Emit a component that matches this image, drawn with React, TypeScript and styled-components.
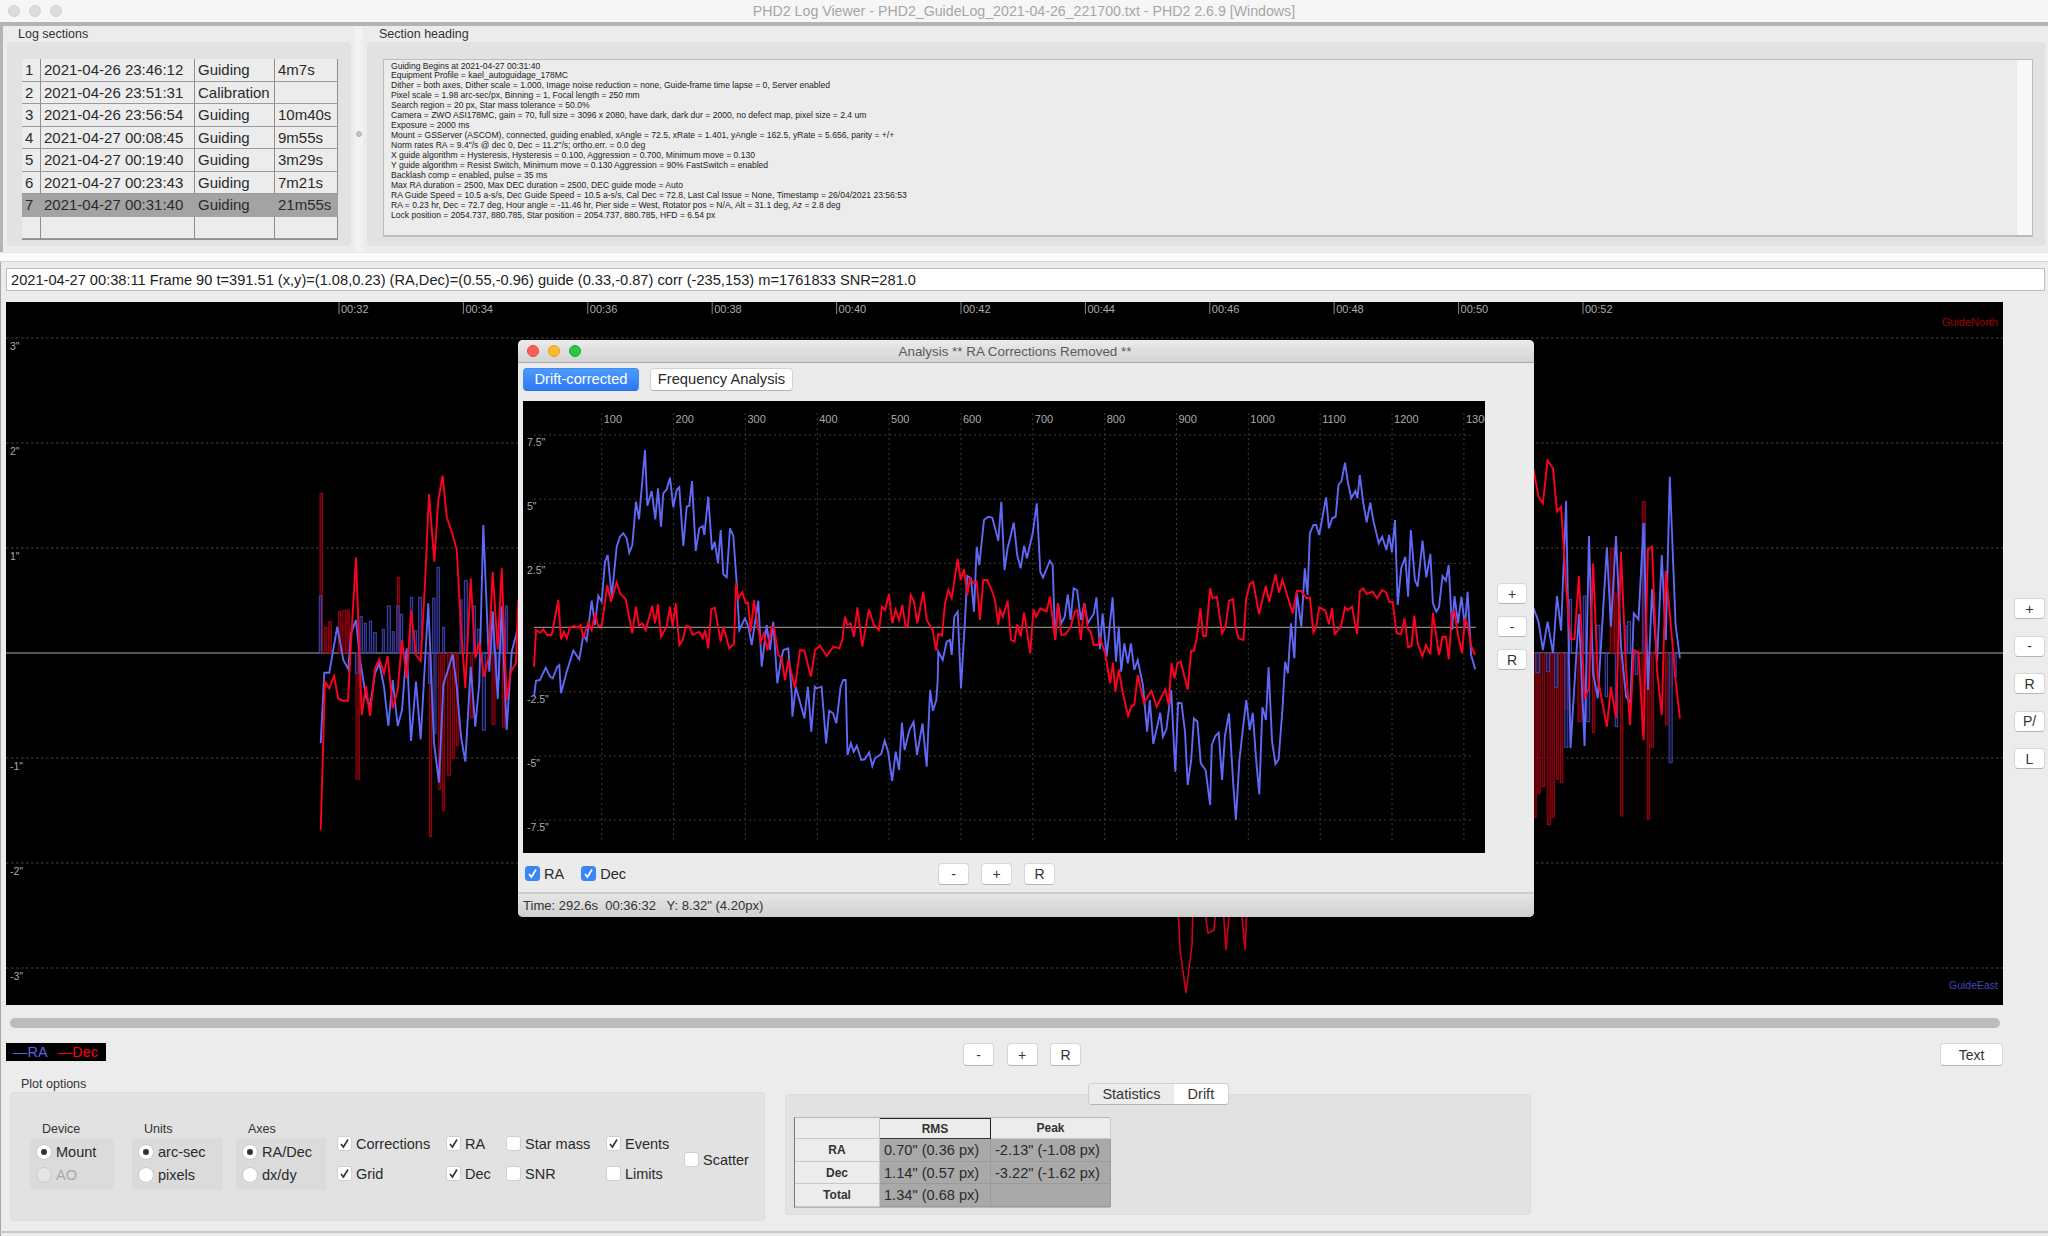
import styled, { createGlobalStyle } from 'styled-components'

const GlobalStyle = createGlobalStyle`
  html, body { margin: 0; padding: 0; background: #ececec; }
  * { box-sizing: border-box; }
`

type Pt = [number, number]

// traced points are kept in crop coordinates, this puts them back on the page
const toPage = (pts: Pt[], ox: number, oy: number, sx = 3, sy = 3): Pt[] =>
  pts.map(([x, y]) => [ox + x / sx, oy + y / sy])

const toLine = (pts: Pt[]) => pts.map(([x, y]) => `${x.toFixed(1)},${y.toFixed(1)}`).join(' ')

// ─── data: section table ───
const sections = [
  ['1', '2021-04-26 23:46:12', 'Guiding', '4m7s'],
  ['2', '2021-04-26 23:51:31', 'Calibration', ''],
  ['3', '2021-04-26 23:56:54', 'Guiding', '10m40s'],
  ['4', '2021-04-27 00:08:45', 'Guiding', '9m55s'],
  ['5', '2021-04-27 00:19:40', 'Guiding', '3m29s'],
  ['6', '2021-04-27 00:23:43', 'Guiding', '7m21s'],
  ['7', '2021-04-27 00:31:40', 'Guiding', '21m55s'],
  ['', '', '', ''],
]

const headingLines = [
  'Guiding Begins at 2021-04-27 00:31:40',
  'Equipment Profile = kael_autoguidage_178MC',
  'Dither = both axes, Dither scale = 1.000, Image noise reduction = none, Guide-frame time lapse = 0, Server enabled',
  'Pixel scale = 1.98 arc-sec/px, Binning = 1, Focal length = 250 mm',
  'Search region = 20 px, Star mass tolerance = 50.0%',
  'Camera = ZWO ASI178MC, gain = 70, full size = 3096 x 2080, have dark, dark dur = 2000, no defect map, pixel size = 2.4 um',
  'Exposure = 2000 ms',
  'Mount = GSServer (ASCOM), connected, guiding enabled, xAngle = 72.5, xRate = 1.401, yAngle = 162.5, yRate = 5.656, parity = +/+',
  'Norm rates RA = 9.4"/s @ dec 0, Dec = 11.2"/s; ortho.err. = 0.0 deg',
  'X guide algorithm = Hysteresis, Hysteresis = 0.100, Aggression = 0.700, Minimum move = 0.130',
  'Y guide algorithm = Resist Switch, Minimum move = 0.130 Aggression = 90% FastSwitch = enabled',
  'Backlash comp = enabled, pulse = 35 ms',
  'Max RA duration = 2500, Max DEC duration = 2500, DEC guide mode = Auto',
  'RA Guide Speed = 10.5 a-s/s, Dec Guide Speed = 10.5 a-s/s, Cal Dec = 72.8, Last Cal Issue = None, Timestamp = 26/04/2021 23:56:53',
  'RA = 0.23 hr, Dec = 72.7 deg, Hour angle = -11.46 hr, Pier side = West, Rotator pos = N/A, Alt = 31.1 deg, Az = 2.8 deg',
  'Lock position = 2054.737, 880.785, Star position = 2054.737, 880.785, HFD = 6.54 px',
]

// ─── data: main plot, only what shows around the dialog ───
const leftBlue = toPage([[122,850],[133,638],[148,638],[172,500],[190,600],[205,628],[213,520],[228,480],[240,600],[258,710],[270,740],[285,640],[298,610],[312,680],[325,798],[338,660],[353,798],[366,750],[380,565],[393,843],[408,665],[422,838],[445,430],[462,850],[477,968],[490,675],[518,583],[530,680],[543,830],[556,905],[572,620],[586,800],[598,670],[610,195],[628,635],[638,455],[653,718],[665,440],[680,810],[695,575],[715,500]], 280, 460)
const leftRed = toPage([[122,1110],[135,665],[148,685],[162,648],[175,716],[190,722],[204,722],[215,510],[228,292],[245,765],[258,678],[270,768],[285,625],[298,597],[312,640],[323,588],[338,745],[353,690],[366,540],[380,655],[393,452],[408,585],[422,603],[435,370],[447,102],[463,305],[475,120],[488,47],[500,170],[518,225],[530,268],[543,500],[556,685],[572,355],[586,595],[598,548],[612,650],[626,590],[638,335],[653,568],[665,325],[680,720],[692,635],[708,610],[715,420]], 280, 460)
const rightBlue = toPage([[40,505],[55,545],[68,630],[82,545],[98,640],[110,468],[122,572],[137,182],[150,925],[175,522],[192,918],[205,288],[217,700],[231,775],[258,322],[270,560],[285,288],[300,620],[315,770],[328,790],[338,520],[352,538],[367,250],[380,750],[392,448],[407,665],[421,345],[433,600],[445,110],[462,555],[475,655]], 1520, 440, 2.97)
const rightRed = toPage([[40,88],[55,170],[68,190],[82,62],[98,85],[110,215],[122,200],[137,440],[150,597],[162,598],[175,408],[192,775],[205,745],[217,370],[231,715],[258,860],[270,740],[285,835],[300,335],[315,690],[327,855],[338,630],[352,637],[367,900],[380,328],[392,320],[407,690],[421,825],[433,392],[445,520],[462,720],[475,835]], 1520, 440, 2.97)
const underRed: Pt[] = [[1178,905],[1180,950],[1186,993],[1192,945],[1193,905],[1204,905],[1208,933],[1214,930],[1216,905],[1223,905],[1226,950],[1230,905],[1241,905],[1245,950],[1247,905]]

type Bar = [number, number, number]
const ZERO_Y = 653
const barRect = ([x0, x1, y]: Bar) => ({ x: x0, width: x1 - x0, y: Math.min(y, ZERO_Y), height: Math.abs(y - ZERO_Y) })

const leftBars = (bars: Bar[]): Bar[] => bars.map(([a, b, y]) => [280 + a / 3, 280 + b / 3, 460 + y / 3])
const rightBars = (bars: Bar[]): Bar[] => bars.map(([a, b, y]) => [1520 + a / 2.97, 1520 + b / 2.97, 440 + y / 3])

const redBars = [
  ...leftBars([[120,127,100],[133,140,502],[145,154,485],[175,182,455],[187,197,452],[201,208,450],[352,358,352],[228,238,958],[448,455,1130],[475,482,988],[487,494,1052],[503,511,946],[517,524,896],[529,535,857],[571,578,773],[636,645,793],[667,674,802]]),
  ...rightBars([[40,48,1132],[53,60,1060],[66,73,1040],[81,90,1154],[95,102,1132],[108,115,1018],[120,127,1028],[133,142,805],[172,182,845],[215,222,878],[298,305,1128],[378,385,1138],[390,397,922],[432,439,855],[445,452,745],[362,368,885],[268,280,325],[281,288,460],[363,372,185]]),
]
const blueBars = [
  ...leftBars([[118,125,408],[240,247,470],[253,259,490],[268,275,484],[281,289,518],[307,313,508],[322,331,438],[337,343,515],[350,357,438],[361,368,463],[391,398,412],[403,410,512],[416,424,412],[458,465,415],[471,478,322],[488,494,502],[540,546,420],[553,562,362],[580,586,438],[592,600,508],[633,640,455],[663,670,438],[677,682,438],[226,235,640],[445,451,670],[462,468,820],[607,616,810],[650,658,660]]),
  ...rightBars([[47,58,698],[78,88,695],[103,112,742],[133,142,922],[198,207,845],[253,260,770],[283,290,860],[342,350,703],[443,452,968],[458,464,710],[147,153,478],[188,195,468],[227,237,556],[312,318,558],[319,328,545],[365,372,250]]),
]

const timeTicks = ['00:32','00:34','00:36','00:38','00:40','00:42','00:44','00:46','00:48','00:50','00:52']
const plotRows = [['3"',338],['2"',443],['1"',548],['-1"',758],['-2"',863],['-3"',968]] as const

// ─── data: drift chart in the dialog ───
const driftBlue: Pt[] = [
  ...toPage([[72,1100]], 510, 330),
  ...toPage([[78,1052],[90,1050],[107,1013],[120,1040],[128,1045],[142,1010],[148,1005],[153,1090],[170,1025],[190,962],[208,988],[220,915],[230,932],[245,812],[255,885],[265,797],[275,815],[285,695],[293,675],[305,800],[320,650],[330,620],[340,610],[350,625],[358,668],[367,645],[378,515],[387,568],[405,360],[412,527],[425,483],[436,568],[444,475],[453,590],[460,490],[470,478],[480,443],[490,532],[500,480],[508,472],[520,648],[530,530],[538,527],[546,453],[557,663],[568,595],[578,588],[583,615],[595,500],[606,660],[614,635],[624,700],[632,600],[640,733],[650,742],[660,595],[670,617],[680,760],[688,900],[705,865],[715,890],[725,945],[745,812],[755,1010],[770,885],[780,960],[790,875],[802,1060],[812,995],[820,960],[835,955],[845,1090]], 510, 330),
  ...toPage([[820,110],[830,20],[855,115],[865,20],[875,155],[885,20],[890,25],[905,20],[918,190],[927,92],[938,100],[948,130],[960,20],[968,0],[975,0],[980,225],[990,190],[998,215],[1007,197],[1020,240],[1030,238],[1043,217],[1052,258],[1060,235],[1078,222],[1088,182],[1098,215],[1110,303],[1120,215],[1130,270],[1138,128],[1146,210],[1160,150],[1172,125],[1182,225],[1198,130],[1210,260],[1220,30],[1228,92],[1238,60],[1242,0]], 510, 680, 2.904),
  ...toPage([[1285,965],[1298,990],[1310,935],[1320,930],[1325,975],[1333,860],[1343,845],[1353,1075],[1365,870],[1372,738],[1383,745],[1392,845],[1400,650],[1408,705],[1422,570],[1435,560],[1447,563],[1465,632],[1474,515]], 510, 330),
  ...toPage([[13,540],[22,475],[40,398],[50,495],[60,535],[70,467],[78,505],[95,430],[107,340],[117,545],[125,563],[145,512],[153,525],[160,750],[168,640],[178,700],[188,680],[197,613],[205,690],[214,595],[224,600],[235,690],[245,640],[255,700],[262,688],[272,672],[280,622],[290,778],[298,670],[310,800],[327,622],[337,815],[345,710],[352,845],[361,760],[371,820],[380,760],[390,840],[400,810],[415,885]], 1000, 390, 2.904),
  ...toPage([[340,95],[348,0],[358,132],[378,38],[386,110],[396,88],[410,-30],[422,215],[430,8],[440,10],[450,95],[458,255],[468,180],[476,55],[486,65],[496,190],[510,210],[523,315],[528,135],[538,108],[548,98],[558,240],[566,108],[578,40],[590,250],[598,360],[608,180],[620,70],[628,0],[638,90],[647,38],[656,170],[666,283],[675,22],[685,60]], 1030, 700, 2.904),
  ...toPage([[780,832],[790,1050]], 1000, 390, 2.904),
  ...toPage([[703,125],[713,192],[722,178]], 1030, 700, 2.904),
  ...toPage([[820,960],[828,815],[836,850],[845,700],[855,805],[862,610],[875,710],[885,535],[893,615],[900,430],[910,405],[918,405],[927,435],[947,322],[955,415],[965,385],[975,380],[983,285],[992,272],[1002,218],[1010,275],[1020,325],[1032,303],[1038,325],[1045,255],[1055,340],[1065,397],[1075,338],[1085,395],[1100,460],[1110,440],[1122,480],[1130,435],[1138,487],[1147,390],[1155,645],[1165,535],[1177,500],[1185,620],[1193,420],[1205,570],[1213,590],[1227,452],[1238,562],[1250,492],[1257,640],[1267,665],[1275,652],[1285,558],[1295,572],[1303,525],[1313,720],[1320,618],[1330,700],[1340,620],[1350,710],[1358,605],[1368,795],[1380,838]], 1000, 390, 2.904),
]

const driftRed: Pt[] = [
  ...toPage([[72,1010],[78,900],[90,908],[100,898],[112,915],[125,915],[145,810],[153,928],[162,905],[170,925],[180,892],[192,888],[205,893],[212,885],[220,925],[235,877],[245,900],[255,850],[265,888],[275,888],[292,765],[303,815],[320,757],[330,790],[347,808],[367,910],[378,830],[387,887],[397,880],[407,900],[427,827],[435,880],[444,823],[453,920],[470,890],[480,830],[488,890],[497,820],[508,945],[518,930],[528,888],[538,890],[548,915],[568,905],[578,925],[585,900],[595,955],[604,838],[614,833],[632,935],[640,890],[658,955],[672,942],[678,760],[685,805],[697,787],[707,820],[714,818],[722,905],[732,810],[742,880],[752,935],[762,910],[772,960],[785,890],[792,892],[805,975],[815,985],[825,1050],[835,990],[855,1075],[870,960],[883,962],[903,1040],[915,960],[930,947],[950,978],[970,950],[988,955],[997,930],[1005,860],[1012,885],[1022,880],[1032,920],[1042,832],[1057,950],[1077,838],[1092,885],[1107,900],[1116,830],[1125,840],[1137,792],[1147,880],[1157,840],[1167,870],[1177,825],[1187,890],[1193,890],[1202,795],[1212,815],[1222,880],[1240,785],[1250,870],[1268,900],[1278,962],[1285,912],[1296,917],[1305,820],[1315,780],[1325,805],[1343,687],[1352,750],[1362,717],[1372,795],[1380,745],[1392,760],[1400,755],[1410,870],[1420,750],[1432,750],[1445,780],[1455,810],[1465,885]], 510, 330),
  ...toPage([[0,660],[8,680],[22,632],[32,750],[42,755],[50,703],[60,740],[70,668],[88,790],[97,658],[105,680],[117,655],[135,665],[145,620],[160,750],[168,640],[178,735],[190,733],[205,712],[217,665],[225,660],[235,750],[245,642],[255,715],[263,725],[272,765],[285,765],[290,745],[305,790],[320,880],[328,818],[335,905],[345,838],[355,900],[372,978],[382,948],[390,945],[400,855],[418,938],[440,902],[455,950],[480,898],[490,945],[498,820],[507,865],[515,820],[525,815],[545,900],[555,782],[563,782],[572,740],[582,655],[590,738],[598,738],[610,595],[617,625],[630,620],[645,730],[655,710],[665,632],[677,628],[685,715],[693,745],[707,750],[715,625],[725,583],[735,575],[752,672],[772,588],[782,635],[800,553],[810,608],[820,570],[850,670],[862,603],[875,603],[890,625],[900,623],[910,728],[918,712],[927,652],[945,662],[955,703],[964,655],[972,732],[990,710],[1002,652],[1010,660],[1022,650],[1037,732],[1045,603],[1055,595],[1065,612],[1082,605],[1095,625],[1110,600],[1122,608],[1130,635],[1140,635],[1152,730],[1165,732],[1175,685],[1185,772],[1195,768],[1203,677],[1213,760],[1227,798],[1237,765],[1250,793],[1257,668],[1275,795],[1285,740],[1295,740],[1303,808],[1313,667],[1320,665],[1330,735],[1342,790],[1350,685],[1358,705],[1368,768],[1380,795]], 1000, 390, 2.904),
]

const driftTicks = ['100','200','300','400','500','600','700','800','900','1000','1100','1200','1300']
const driftRows = [['7.5"',435],['5"',499.2],['2.5"',563.3],['-2.5"',691.7],['-5"',756],['-7.5"',820]] as const

// ─── 页面 ───
const Page = styled.div`
  position: relative;
  width: 2048px;
  height: 1236px;
  overflow: hidden;
  background: #ececec;
  color: #222;
  font-family: "Liberation Sans", Arial, sans-serif;
`

const TitleBar = styled.div`
  position: relative;
  height: 26px;
  display: flex;
  align-items: center;
  justify-content: center;
  background: #f6f6f6;
  border-bottom: 4px solid #b4b4b4;
  color: #a6a6a6;
  font-size: 14.2px;
`

const Lights = styled.div`
  position: absolute;
  left: 8px;
  top: 5px;
  display: flex;
  gap: 9px;
`

const Light = styled.span<{ $color: string; $edge: string }>`
  width: 12px;
  height: 12px;
  border-radius: 50%;
  background: ${p => p.$color};
  border: 1px solid ${p => p.$edge};
`

// ─── top splitter ───
const TopSplit = styled.div`
  height: 226px;
  display: flex;
  padding: 0 3px 0 4px;
  border-left: 3px solid #b4b4b4;
`

const TopPane = styled.div<{ $grow?: boolean }>`
  display: flex;
  flex-direction: column;
  ${p => p.$grow ? 'flex: 1;' : 'width: 344px;'}
`

const PaneTitle = styled.div<{ $indent: number }>`
  height: 16px;
  line-height: 17px;
  padding-left: ${p => p.$indent}px;
  font-size: 12.5px;
  color: #333;
`

const PaneBox = styled.div`
  height: 204px;
  padding: 17px 0 0 15px;
  background: #e2e2e2;
  border-radius: 4px;
`

const Sash = styled.div`
  width: 16px;
  margin-top: -1px;
  display: flex;
  align-items: center;
  justify-content: flex-start;
  padding: 0 0 0 4px;
`

const SashCore = styled.div`
  width: 8px;
  height: 100%;
  display: flex;
  align-items: center;
  justify-content: center;
  background: #f2f2f2;
  padding-bottom: 10px;
`

const SashDot = styled.span`
  width: 6px;
  height: 6px;
  border-radius: 50%;
  background: #c6c6c6;
  border: 1px solid #b0b0b0;
`

const SectionTable = styled.div`
  width: 316px;
  display: grid;
  grid-template-columns: 19px 154px 80px 63px;
  grid-auto-rows: 22.5px;
  background: #ececec;
  border-bottom: 1px solid #8f8f8f;
`

const SectionCell = styled.div<{ $selected: boolean }>`
  display: flex;
  align-items: center;
  padding-left: 3px;
  font-size: 15px;
  white-space: nowrap;
  color: #2a2a2a;
  background: ${p => p.$selected ? '#a3a3a3' : 'transparent'};
  border-right: 1px solid ${p => p.$selected ? '#a3a3a3' : '#8f8f8f'};
  border-bottom: 1px solid ${p => p.$selected ? '#a3a3a3' : '#9a9a9a'};
`

const HeadingBox = styled.div`
  width: 1650px;
  height: 178px;
  margin-left: 1px;
  display: flex;
  background: #ececec;
  border: 1px solid #bdbdbd;
  border-bottom-width: 2px;
`

const HeadingText = styled.div`
  flex: 1;
  padding: 1.5px 0 0 7px;
  font-size: 8.55px;
  line-height: 9.93px;
  color: #222;
  white-space: nowrap;
`

const HeadingScroll = styled.div`
  width: 15px;
  background: #f8f8f8;
`

const SashBand = styled.div`
  height: 10px;
  background: #fbfbfb;
  border-top: 1px solid #e4e4e4;
  border-bottom: 1px solid #d4d4d4;
`

// ─── lower window, with the thin edge on its left ───
const LowerPart = styled.div`
  height: 974px;
  box-shadow: inset 1px 0 0 #a8a8a8;
  padding-top: 6px;
`

// ─── status line ───
const InfoField = styled.div`
  width: 2039px;
  height: 23px;
  margin-left: 6px;
  padding-left: 4px;
  display: flex;
  align-items: center;
  background: #fff;
  border: 1px solid #c0c0c0;
  font-size: 14.63px;
  color: #222;
  white-space: nowrap;
`

// ─── plot area ───
const PlotRow = styled.div`
  margin: 11px 0 0 6px;
  display: flex;
  height: 703px;
`

const PlotSvg = styled.svg`
  width: 1997px;
  height: 703px;
  display: block;
  background: #000;
  font-family: "Liberation Sans", Arial, sans-serif;
`

const SideButtons = styled.div`
  margin-left: 11px;
  padding-top: 296px;
  display: flex;
  flex-direction: column;
  gap: 16.6px;
`

const MacButton = styled.button<{ $width: number; $height?: number }>`
  width: ${p => p.$width}px;
  height: ${p => p.$height ?? 21}px;
  padding: 0;
  background: #fff;
  border: 1px solid #d6d6d6;
  border-bottom: 1px solid #b4b4b4;
  border-radius: 4px;
  color: #333;
  font-family: inherit;
  font-size: 14px;
  line-height: 1;
`

const ScrollTrack = styled.div`
  width: 1990px;
  height: 10px;
  margin: 13px 0 0 10px;
  background: #bcbcbc;
  border-radius: 5px;
`

const PlotControls = styled.div`
  height: 23px;
  margin-top: 15px;
  padding-left: 6px;
  display: flex;
  align-items: flex-start;
`

const Legend = styled.div`
  width: 100px;
  height: 18px;
  display: flex;
  align-items: center;
  gap: 10px;
  padding-left: 7px;
  background: #000;
  font-size: 14.5px;
  white-space: nowrap;
`

const LegendItem = styled.span<{ $color: string }>`
  color: ${p => p.$color};
`

const ZoomGroup = styled.div`
  margin-left: 857px;
  display: flex;
  gap: 12.5px;
`

const TextButton = styled(MacButton)`
  margin-left: 859px;
`

// ─── bottom panels ───
const BottomRow = styled.div`
  height: 167px;
  padding-left: 10px;
  display: flex;
  align-items: flex-start;
  gap: 20px;
  border-bottom: 2px solid #c6c6c6;
`

const OptionsPane = styled.div`
  width: 755px;
  padding-top: 11px;
`

const OptionsTitle = styled.div`
  height: 15px;
  padding-left: 11px;
  line-height: 14px;
  font-size: 12.5px;
  color: #333;
`

const OptionsBox = styled.div`
  height: 129px;
  padding: 29px 0 0 19px;
  display: flex;
  align-items: flex-start;
  background: #e2e2e2;
  border: 1px solid #dcdcdc;
  border-radius: 4px;
`

const RadioGroup = styled.div<{ $w: number; $gap: number }>`
  width: ${p => p.$w}px;
  margin-right: ${p => p.$gap}px;
`

const RadioTitle = styled.div`
  height: 16px;
  padding-left: 12px;
  line-height: 14px;
  font-size: 12.5px;
  color: #333;
`

const RadioBox = styled.div`
  height: 52px;
  padding: 5px 0 0 6px;
  display: flex;
  flex-direction: column;
  gap: 6px;
  background: #dbdbdb;
  border-radius: 4px;
`

const RadioRow = styled.div<{ $disabled?: boolean }>`
  display: flex;
  align-items: center;
  gap: 4px;
  height: 17px;
  font-size: 14.5px;
  color: ${p => p.$disabled ? '#a8a8a8' : '#2a2a2a'};
`

const RadioDot = styled.span<{ $on?: boolean; $disabled?: boolean }>`
  width: 16px;
  height: 16px;
  display: flex;
  align-items: center;
  justify-content: center;
  border-radius: 50%;
  background: ${p => p.$disabled ? '#e4e4e4' : '#fff'};
  border: 1px solid #cacaca;
  &::after {
    content: '';
    display: ${p => p.$on ? 'block' : 'none'};
    width: 6px;
    height: 6px;
    border-radius: 50%;
    background: #333;
  }
`

const CheckColumn = styled.div<{ $w: number; $top?: number }>`
  width: ${p => p.$w}px;
  padding-top: ${p => p.$top ?? 14}px;
  display: flex;
  flex-direction: column;
  gap: 15px;
`

const CheckRow = styled.div`
  height: 15px;
  display: flex;
  align-items: center;
  gap: 4px;
  font-size: 14.5px;
  color: #2a2a2a;
  white-space: nowrap;
`

const CheckBox = styled.span<{ $blue?: boolean }>`
  width: 15px;
  height: 15px;
  display: flex;
  align-items: center;
  justify-content: center;
  border-radius: 3px;
  background: ${p => p.$blue ? '#3b86f7' : '#fff'};
  border: 1px solid ${p => p.$blue ? '#3b86f7' : '#cfcfcf'};
  color: ${p => p.$blue ? '#fff' : '#333'};
`

const StatsPane = styled.div`
  position: relative;
  width: 746px;
  margin-top: 28px;
  padding: 22px 0 0 8px;
  height: 121px;
  background: #e2e2e2;
  border: 1px solid #dcdcdc;
  border-radius: 4px;
`

const TabBar = styled.div`
  position: absolute;
  left: 302px;
  top: -12px;
  width: 141px;
  height: 22px;
  display: flex;
  overflow: hidden;
  border: 1px solid #d0d0d0;
  border-bottom-color: #b4b4b4;
  border-radius: 4px;
`

const Tab = styled.div<{ $active: boolean; $w: number }>`
  width: ${p => p.$w}px;
  display: flex;
  align-items: center;
  justify-content: center;
  font-size: 14.5px;
  color: #333;
  background: ${p => p.$active ? '#ececec' : '#fff'};
`

const StatsGrid = styled.div`
  width: 316px;
  display: grid;
  grid-template-columns: 85px 111px 120px;
  grid-template-rows: 21px 23px 22px 23px;
  border: 1px solid #b8b8b8;
  border-left-color: #777;
`

const StatHeader = styled.div<{ $focus?: boolean }>`
  display: flex;
  align-items: center;
  justify-content: center;
  background: #ececec;
  font-size: 12px;
  font-weight: 700;
  color: #333;
  border-bottom: 1px solid ${p => p.$focus ? '#333' : '#c8c8c8'};
  border-top: ${p => p.$focus ? '1px solid #222' : 'none'};
  border-right: 1px solid ${p => p.$focus ? '#222' : '#c8c8c8'};
`

const StatValue = styled.div`
  display: flex;
  align-items: center;
  padding-left: 4px;
  background: #a9a9a9;
  font-size: 14.6px;
  color: #2a2a2a;
  white-space: nowrap;
  border-right: 1px solid #9a9a9a;
  border-bottom: 1px solid #9a9a9a;
`

// ─── analysis dialog, floats over the plot ───
const Dialog = styled.div`
  position: absolute;
  left: 518px;
  top: 340px;
  width: 1016px;
  height: 577px;
  display: flex;
  flex-direction: column;
  background: #ebebeb;
  border-radius: 5px;
  overflow: hidden;
`

const DialogTitle = styled.div`
  position: relative;
  flex: 0 0 23px;
  padding-right: 22px;
  display: flex;
  align-items: center;
  justify-content: center;
  background: linear-gradient(#ebebeb, #d3d3d3);
  border-bottom: 1px solid #a8a8a8;
  color: #5a5a5a;
  font-size: 13.4px;
`

const DialogLights = styled(Lights)`
  left: 9px;
  top: 5px;
`

const ModeRow = styled.div`
  padding: 5px 0 0 5px;
  height: 38px;
  display: flex;
  gap: 11px;
`

const ModeButton = styled.button<{ $active: boolean; $w: number }>`
  width: ${p => p.$w}px;
  height: 23px;
  padding: 0 0 1px;
  border-radius: 4px;
  border: 1px solid ${p => p.$active ? '#3f8cf7' : '#d2d2d2'};
  border-bottom-color: ${p => p.$active ? '#2a6fe0' : '#b4b4b4'};
  background: ${p => p.$active ? 'linear-gradient(#4f9bf9, #2b78f5)' : '#fff'};
  color: ${p => p.$active ? '#fff' : '#2a2a2a'};
  font-family: inherit;
  font-size: 14.7px;
`

const ChartRow = styled.div`
  padding-left: 5px;
  display: flex;
  height: 452px;
`

const ChartSvg = styled.svg`
  width: 962px;
  height: 452px;
  display: block;
  background: #000;
  font-family: "Liberation Sans", Arial, sans-serif;
`

const ChartButtons = styled.div`
  margin-left: 12px;
  padding-top: 182px;
  display: flex;
  flex-direction: column;
  gap: 12px;
`

const ChartFooter = styled.div`
  flex: 1;
  padding: 10px 0 0 7px;
  display: flex;
  align-items: flex-start;
`

const FooterChecks = styled.div`
  width: 413px;
  padding-top: 3px;
  display: flex;
  gap: 17px;
`

const FooterZoom = styled.div`
  display: flex;
  gap: 12px;
`

const StatusBar = styled.div`
  flex: 0 0 25px;
  padding: 0 0 1px 5px;
  display: flex;
  align-items: center;
  background: linear-gradient(#e6e6e6, #cfcfcf);
  border-top: 2px solid #cdcdcd;
  color: #333;
  font-size: 13.05px;
  white-space: pre;
`

const Tick = () => (
  <svg width="13" height="13" viewBox="0 0 13 13" fill="none" stroke="currentColor" strokeWidth="1.6">
    <path d="M3 7 L5.4 10 L10 2.5" />
  </svg>
)

const Option = ({ label, on, blue }: { label: string; on?: boolean; blue?: boolean }) => (
  <CheckRow>
    <CheckBox $blue={blue}>{on && <Tick />}</CheckBox>
    {label}
  </CheckRow>
)

const Radio = ({ label, on, disabled }: { label: string; on?: boolean; disabled?: boolean }) => (
  <RadioRow $disabled={disabled}>
    <RadioDot $on={on} $disabled={disabled} />
    {label}
  </RadioRow>
)

const MainPlot = () => (
  <PlotSvg viewBox="6 302 1997 703">
    {plotRows.map(([label, y]) => (
      <g key={label}>
        <line x1="6" x2="2003" y1={y} y2={y} stroke="#444" strokeDasharray="2.5 2.5" />
        <text x="10" y={y + 11.5} fill="#aaa" fontSize="10.5">{label}</text>
      </g>
    ))}
    {timeTicks.map((t, i) => {
      const x = 339 + i * 124.4
      return (
        <g key={t}>
          <line x1={x} x2={x} y1="302" y2="314" stroke="#888" />
          <text x={x + 2} y="313" fill="#aaa" fontSize="11">{t}</text>
        </g>
      )
    })}
    <line x1="6" x2="2003" y1={ZERO_Y} y2={ZERO_Y} stroke="#aaa" />
    {redBars.map((b, i) => (
      <rect key={i} {...barRect(b)} fill="#4a0006" stroke="#a00014" />
    ))}
    {blueBars.map((b, i) => (
      <rect key={i} {...barRect(b)} fill="#1a1a4a" fillOpacity="0.65" stroke="#3f45b0" />
    ))}
    <polyline points={toLine(underRed)} fill="none" stroke="#d0001c" strokeWidth="1.6" />
    <polyline points={toLine(leftBlue)} fill="none" stroke="#6068f5" strokeWidth="1.9" />
    <polyline points={toLine(leftRed)} fill="none" stroke="#ff0020" strokeWidth="1.9" />
    <polyline points={toLine(rightBlue)} fill="none" stroke="#6068f5" strokeWidth="1.9" />
    <polyline points={toLine(rightRed)} fill="none" stroke="#ff0020" strokeWidth="1.9" />
    <text x="1998" y="326" textAnchor="end" fill="#a00000" fontSize="11">GuideNorth</text>
    <text x="1998" y="989" textAnchor="end" fill="#4048b8" fontSize="10.5">GuideEast</text>
  </PlotSvg>
)

const DriftChart = () => (
  <ChartSvg viewBox="523 401 962 452">
    {driftTicks.map((t, i) => {
      const x = 601.7 + i * 71.85
      return (
        <g key={t}>
          <line x1={x} x2={x} y1="413" y2="843" stroke="#3c3c3c" strokeDasharray="2 3" />
          <text x={x + 2} y="423" fill="#aaa" fontSize="11">{t}</text>
        </g>
      )
    })}
    {driftRows.map(([label, y]) => (
      <g key={label}>
        <line x1="534" x2="1474" y1={y} y2={y} stroke="#3c3c3c" strokeDasharray="2 3" />
        <text x="527" y={y + 11} fill="#aaa" fontSize="10.5">{label}</text>
      </g>
    ))}
    <line x1="534" x2="1476" y1="627.3" y2="627.3" stroke="#aaa" />
    <polyline points={toLine(driftBlue)} fill="none" stroke="#6068f5" strokeWidth="1.9" />
    <polyline points={toLine(driftRed)} fill="none" stroke="#ff0020" strokeWidth="1.9" />
  </ChartSvg>
)

export default function App() {
  return (
    <Page>
      <GlobalStyle />
      <TitleBar>
        <Lights>
          <Light $color="#dcdcdc" $edge="#d2d2d2" />
          <Light $color="#dcdcdc" $edge="#d2d2d2" />
          <Light $color="#dcdcdc" $edge="#d2d2d2" />
        </Lights>
        PHD2 Log Viewer - PHD2_GuideLog_2021-04-26_221700.txt - PHD2 2.6.9 [Windows]
      </TitleBar>

      <TopSplit>
        <TopPane>
          <PaneTitle $indent={11}>Log sections</PaneTitle>
          <PaneBox>
            <SectionTable>
              {sections.flatMap((row, r) =>
                row.map((text, c) => (
                  <SectionCell key={`${r}-${c}`} $selected={r === 6}>{text}</SectionCell>
                ))
              )}
            </SectionTable>
          </PaneBox>
        </TopPane>
        <Sash>
          <SashCore><SashDot /></SashCore>
        </Sash>
        <TopPane $grow>
          <PaneTitle $indent={12}>Section heading</PaneTitle>
          <PaneBox>
            <HeadingBox>
              <HeadingText>
                {headingLines.map(line => <div key={line}>{line}</div>)}
              </HeadingText>
              <HeadingScroll />
            </HeadingBox>
          </PaneBox>
        </TopPane>
      </TopSplit>
      <SashBand />

      <LowerPart>
        <InfoField>
          2021-04-27 00:38:11 Frame 90 t=391.51 (x,y)=(1.08,0.23) (RA,Dec)=(0.55,-0.96) guide (0.33,-0.87) corr (-235,153) m=1761833 SNR=281.0
        </InfoField>

        <PlotRow>
          <MainPlot />
          <SideButtons>
            <MacButton $width={31}>+</MacButton>
            <MacButton $width={31}>-</MacButton>
            <MacButton $width={31}>R</MacButton>
            <MacButton $width={31}>P/</MacButton>
            <MacButton $width={31}>L</MacButton>
          </SideButtons>
        </PlotRow>
        <ScrollTrack />

        <PlotControls>
          <Legend>
            <LegendItem $color="#5a62e8">—RA</LegendItem>
            <LegendItem $color="#f80010">—Dec</LegendItem>
          </Legend>
          <ZoomGroup>
            <MacButton $width={31} $height={23}>-</MacButton>
            <MacButton $width={31} $height={23}>+</MacButton>
            <MacButton $width={31} $height={23}>R</MacButton>
          </ZoomGroup>
          <TextButton $width={63} $height={23}>Text</TextButton>
        </PlotControls>

        <BottomRow>
          <OptionsPane>
            <OptionsTitle>Plot options</OptionsTitle>
            <OptionsBox>
              <RadioGroup $w={84} $gap={18}>
                <RadioTitle>Device</RadioTitle>
                <RadioBox>
                  <Radio label="Mount" on />
                  <Radio label="AO" disabled />
                </RadioBox>
              </RadioGroup>
              <RadioGroup $w={91} $gap={13}>
                <RadioTitle>Units</RadioTitle>
                <RadioBox>
                  <Radio label="arc-sec" on />
                  <Radio label="pixels" />
                </RadioBox>
              </RadioGroup>
              <RadioGroup $w={90} $gap={11}>
                <RadioTitle>Axes</RadioTitle>
                <RadioBox>
                  <Radio label="RA/Dec" on />
                  <Radio label="dx/dy" />
                </RadioBox>
              </RadioGroup>
              <CheckColumn $w={109}>
                <Option label="Corrections" on />
                <Option label="Grid" on />
              </CheckColumn>
              <CheckColumn $w={60}>
                <Option label="RA" on />
                <Option label="Dec" on />
              </CheckColumn>
              <CheckColumn $w={100}>
                <Option label="Star mass" />
                <Option label="SNR" />
              </CheckColumn>
              <CheckColumn $w={78}>
                <Option label="Events" on />
                <Option label="Limits" />
              </CheckColumn>
              <CheckColumn $w={70} $top={30}>
                <Option label="Scatter" />
              </CheckColumn>
            </OptionsBox>
          </OptionsPane>

          <StatsPane>
            <TabBar>
              <Tab $active $w={86}>Statistics</Tab>
              <Tab $active={false} $w={55}>Drift</Tab>
            </TabBar>
            <StatsGrid>
              <StatHeader />
              <StatHeader $focus>RMS</StatHeader>
              <StatHeader>Peak</StatHeader>
              <StatHeader>RA</StatHeader>
              <StatValue>0.70" (0.36 px)</StatValue>
              <StatValue>-2.13" (-1.08 px)</StatValue>
              <StatHeader>Dec</StatHeader>
              <StatValue>1.14" (0.57 px)</StatValue>
              <StatValue>-3.22" (-1.62 px)</StatValue>
              <StatHeader>Total</StatHeader>
              <StatValue>1.34" (0.68 px)</StatValue>
              <StatValue />
            </StatsGrid>
          </StatsPane>
        </BottomRow>
      </LowerPart>

      <Dialog>
        <DialogTitle>
          <DialogLights>
            <Light $color="#fc5f57" $edge="#e14942" />
            <Light $color="#fdbc2e" $edge="#dfa023" />
            <Light $color="#29c83f" $edge="#1dad2b" />
          </DialogLights>
          Analysis ** RA Corrections Removed **
        </DialogTitle>
        <ModeRow>
          <ModeButton $active $w={116}>Drift-corrected</ModeButton>
          <ModeButton $active={false} $w={143}>Frequency Analysis</ModeButton>
        </ModeRow>
        <ChartRow>
          <DriftChart />
          <ChartButtons>
            <MacButton $width={30}>+</MacButton>
            <MacButton $width={30}>-</MacButton>
            <MacButton $width={30}>R</MacButton>
          </ChartButtons>
        </ChartRow>
        <ChartFooter>
          <FooterChecks>
            <Option label="RA" on blue />
            <Option label="Dec" on blue />
          </FooterChecks>
          <FooterZoom>
            <MacButton $width={31} $height={22}>-</MacButton>
            <MacButton $width={31} $height={22}>+</MacButton>
            <MacButton $width={31} $height={22}>R</MacButton>
          </FooterZoom>
        </ChartFooter>
        <StatusBar>{'Time: 292.6s  00:36:32   Y: 8.32" (4.20px)'}</StatusBar>
      </Dialog>
    </Page>
  )
}
